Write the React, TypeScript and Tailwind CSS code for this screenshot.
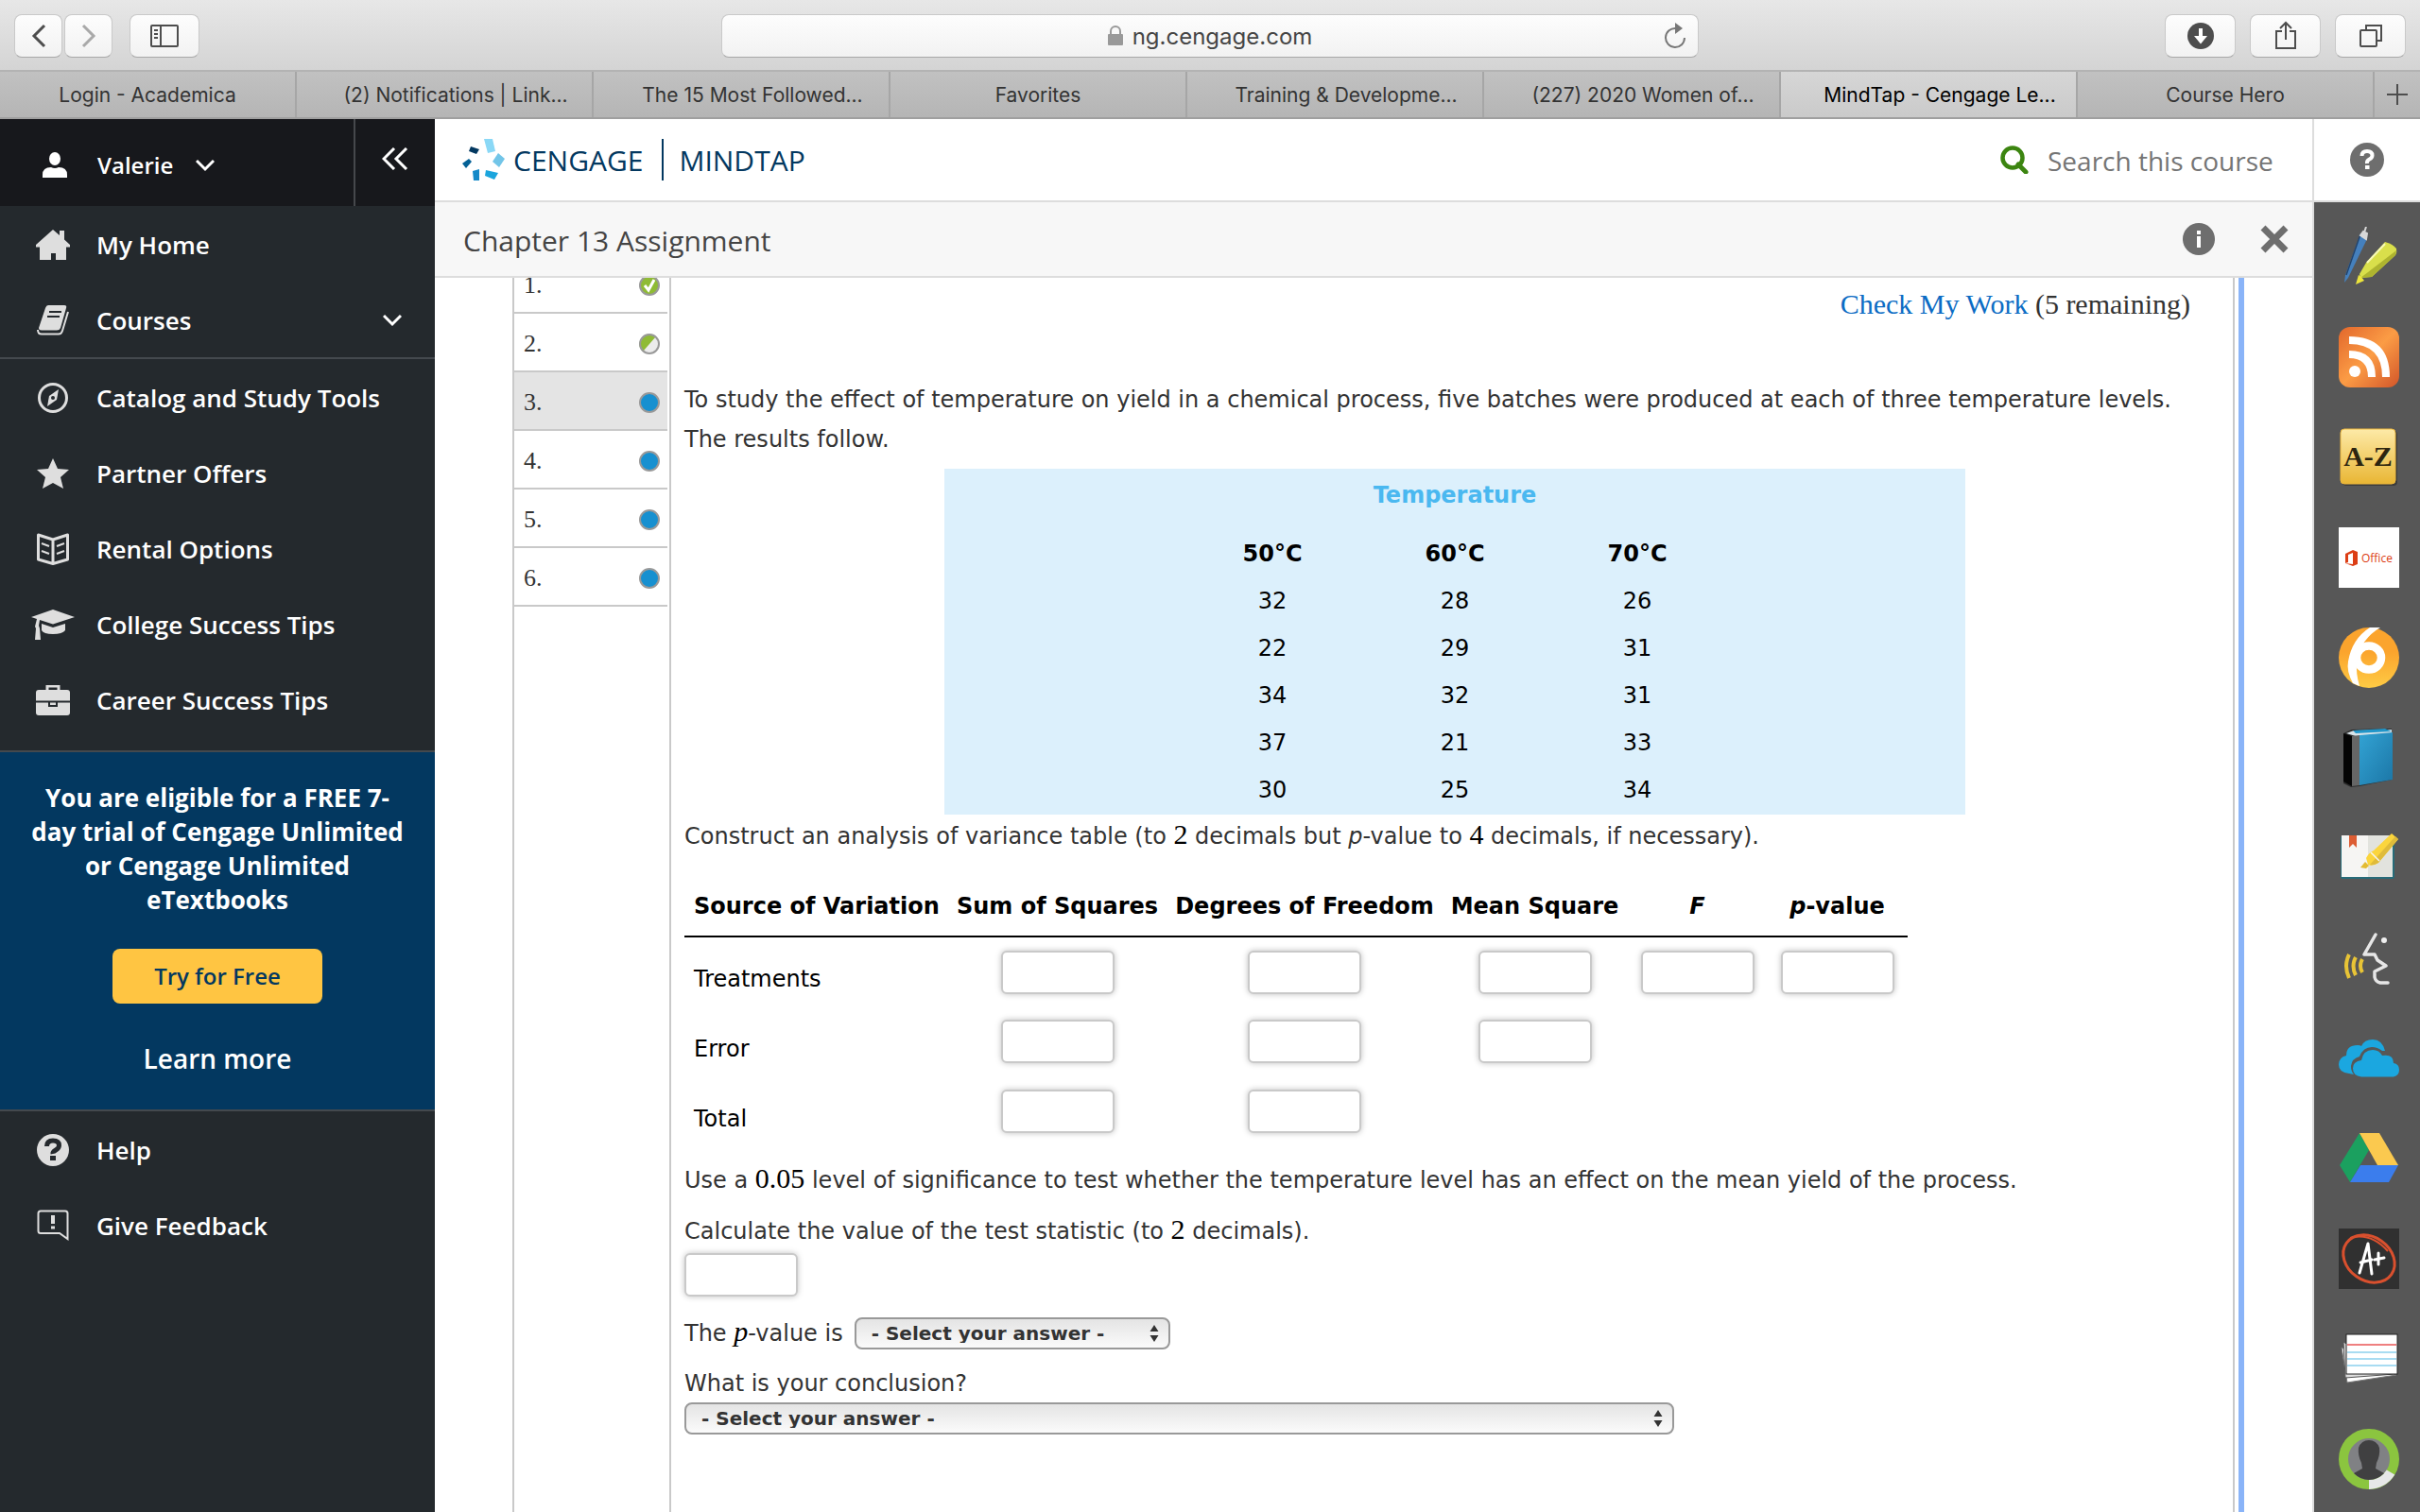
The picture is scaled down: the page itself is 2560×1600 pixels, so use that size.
import React from "react";

const TABS = [
  { label: "Login - Academica" },
  { label: "(2) Notifications | Link...", clipped: true },
  { label: "The 15 Most Followed...", clipped: true },
  { label: "Favorites" },
  { label: "Training & Developme...", clipped: true },
  { label: "(227) 2020 Women of...", clipped: true },
  { label: "MindTap - Cengage Le...", clipped: true, active: true },
  { label: "Course Hero" },
];

const toolButton =
  "flex h-[46px] items-center justify-center rounded-lg border border-[#c9c9c9] border-b-[#a8a8a8] bg-linear-to-b from-[#fdfdfd] to-[#f2f2f2] text-[#4d4d4d]";

function BrowserToolbar() {
  return (
    <div className="flex h-[76px] items-center border-b-2 border-[#b3b3b3] bg-linear-to-b from-[#e7e7e7] to-[#d4d4d4] px-[15px] pt-0.5">
      <div className="flex flex-1 items-center">
        <button aria-label="Back" className={`${toolButton} w-[51px]`}>
          <svg width="18" height="26" viewBox="0 0 18 26" fill="none" stroke="currentColor" strokeWidth="3">
            <path d="M15 2 4 13l11 11" />
          </svg>
        </button>
        <button aria-label="Forward" className={`${toolButton} ml-0.5 w-[51px]`}>
          <svg width="18" height="26" viewBox="0 0 18 26" fill="none" stroke="#a9a9a9" strokeWidth="3">
            <path d="M3 2l11 11L3 24" />
          </svg>
        </button>
        <button aria-label="Show sidebar" className={`${toolButton} ml-[18px] w-[74px]`}>
          <svg width="30" height="26" viewBox="0 0 30 26" fill="none" stroke="currentColor" strokeWidth="2">
            <rect x="1" y="2" width="28" height="22" rx="1" />
            <path d="M11 2v22M4 7h4M4 11h4M4 15h4" />
          </svg>
        </button>
      </div>
      <div className="relative flex h-[46px] w-[1034px] items-center justify-center gap-2.5 rounded-lg border border-[#c9c9c9] border-b-[#a8a8a8] bg-linear-to-b from-[#fdfdfd] to-[#f2f2f2] font-[Inter,sans-serif] text-2xl text-[#454545]">
        <svg width="16" height="22" viewBox="0 0 16 22">
          <path d="M3 9V6a5 5 0 0 1 10 0v3" fill="none" stroke="#999" strokeWidth="2" />
          <rect x="0" y="9" width="16" height="12" rx="1" fill="#999" />
        </svg>
        <span className="pt-0.5">ng.cengage.com</span>
        <button aria-label="Reload" className="absolute right-3 text-[#777]">
          <svg width="24" height="28" viewBox="0 0 24 28" fill="none" stroke="currentColor" strokeWidth="2">
            <path d="M13 6A10 10 0 1 0 22 16" />
            <path d="M12 0l8 6-8 6z" fill="currentColor" stroke="none" />
          </svg>
        </button>
      </div>
      <div className="flex flex-1 justify-end gap-[15px]">
        <button aria-label="Downloads" className={`${toolButton} w-[75px]`}>
          <svg width="28" height="28" viewBox="0 0 28 28">
            <circle cx="14" cy="14" r="14" fill="currentColor" />
            <path d="M12 6h4v8h5l-7 8.500-7-8.500h5z" fill="#fff" />
          </svg>
        </button>
        <button aria-label="Share" className={`${toolButton} w-[75px]`}>
          <svg width="24" height="32" viewBox="0 0 24 32" fill="none" stroke="currentColor" strokeWidth="2">
            <path d="M8 11H2v18h20V11h-6M12 20V2M6 8l6-6 6 6" />
          </svg>
        </button>
        <button aria-label="Show tabs" className={`${toolButton} w-[75px]`}>
          <svg width="26" height="26" viewBox="0 0 26 26" fill="none" stroke="currentColor" strokeWidth="2">
            <rect x="2" y="7" width="17" height="17" rx="1" />
            <path d="M8 7V2h16v16h-5" />
          </svg>
        </button>
      </div>
    </div>
  );
}

function TabStrip() {
  return (
    <div className="flex h-[50px] border-b-2 border-[#9f9f9f] bg-linear-to-b from-[#c1c1c1] to-[#b5b5b5] font-[Inter,sans-serif] text-[21px] text-[#333]">
      {TABS.map((t) => (
        <button
          key={t.label}
          className={`flex min-w-0 flex-1 items-center justify-center border-r-2 border-[#a6a6a6] pt-0.5 whitespace-nowrap ${
            t.active ? "bg-linear-to-b from-[#d6d6d6] to-[#cacaca] text-black" : ""
          }`}
        >
          <span className={t.clipped ? "pl-6" : ""}>{t.label}</span>
        </button>
      ))}
      <button aria-label="New tab" className="flex w-12 items-center justify-center">
        <svg width="22" height="22" viewBox="0 0 22 22" stroke="#4d4d4d" strokeWidth="2">
          <path d="M11 0v22M0 11h22" />
        </svg>
      </button>
    </div>
  );
}

const HomeIcon = (
  <svg width="36" height="32" viewBox="0 0 36 32" fill="#dedede">
    <path d="M18 0l7 6V1h5v9.500l6 5.500v2.500h-4V32H21v-7h-5v7H4V18.500H0V16z" />
  </svg>
);
const CoursesIcon = (
  <svg width="34" height="32" viewBox="0 0 34 32">
    <path d="M12 0h17q3 0 2 3l-6 21q-1 2.500-4 2.500H5Q2 26.500 2 24L9 3q1-3 3-3z" fill="#dedede" />
    <path d="M33 7l-6 20q-1 3.500-4 3.500H5Q1 30.500 1 26" fill="none" stroke="#dedede" strokeWidth="2" />
    <path d="M13 7h13M11 12h13" stroke="#24292d" strokeWidth="2" />
  </svg>
);
const CompassIcon = (
  <svg width="32" height="32" viewBox="0 0 32 32">
    <circle cx="16" cy="16" r="14.500" fill="none" stroke="#dedede" strokeWidth="3" />
    <path d="M22 7l-2 11-10 7 2-11z" fill="#dedede" />
    <circle cx="16" cy="16" r="2" fill="#24292d" />
  </svg>
);
const StarIcon = (
  <svg width="34" height="32" viewBox="0 0 34 32" fill="#dedede">
    <path d="M17 0l5 11 12 1-9 8 3 12-11-6-11 6 3-12-9-8 12-1z" />
  </svg>
);
const RentalIcon = (
  <svg width="34" height="34" viewBox="0 0 34 34" fill="none" stroke="#dedede" strokeWidth="3">
    <path d="M1.500 2L17 7l15.500-5v26L17 32.500 1.500 28zM17 7v25" strokeLinejoin="round" />
    <path d="M5 11l8 3M5 19l8 3M29 11l-8 3M29 19l-8 3" strokeWidth="2" />
  </svg>
);
const CapIcon = (
  <svg width="46" height="32" viewBox="0 0 46 32" fill="#dedede">
    <path d="M23 0l23 8-23 7.500L9 11l-1 6 1 3 1 12H4l1-12-1-2 2-8-6-2z" />
    <path d="M11 15l12 4 13-4v7q-3 4-13 4t-12-4z" />
  </svg>
);
const CaseIcon = (
  <svg width="36" height="32" viewBox="0 0 36 32">
    <path d="M12 6V1h12v5" fill="none" stroke="#dedede" strokeWidth="3" />
    <rect y="5" width="36" height="27" rx="3" fill="#dedede" />
    <path d="M0 17.500h36M14 18v4h8v-4" fill="none" stroke="#24292d" strokeWidth="2" />
  </svg>
);
const HelpIcon = (
  <svg width="34" height="34" viewBox="0 0 34 34">
    <circle cx="17" cy="17" r="17" fill="#dedede" />
    <path d="M10.500 13q0-6 6.500-6t6.500 5q0 3-3.500 5t-3 4" fill="none" stroke="#24292d" strokeWidth="5" />
    <rect x="14" y="23" width="6" height="5" fill="#24292d" />
  </svg>
);
const FeedbackIcon = (
  <svg width="34" height="34" viewBox="0 0 34 34" fill="none" stroke="#dedede">
    <path d="M4 1.500h26q2.500 0 2.500 2.500v27L24 25H4q-2.500 0-2.500-2.500V4q0-2.500 2.500-2.500z" strokeWidth="2" />
    <path d="M17 6v9M17 17.500v3" strokeWidth="4" />
  </svg>
);

function NavRow({ icon, label, chevron }: { icon: React.ReactNode; label: string; chevron?: boolean }) {
  return (
    <a href="#" className="flex h-20 items-center pt-0.5 pr-[35px] pl-8 text-[26px] font-semibold text-white">
      <span className="flex w-12 justify-center">{icon}</span>
      <span className="ml-[22px] flex-1">{label}</span>
      {chevron && <Chevron />}
    </a>
  );
}

function Chevron() {
  return (
    <svg width="20" height="14" viewBox="0 0 20 14" fill="none" stroke="#fff" strokeWidth="3">
      <path d="M1 2l9 9 9-9" />
    </svg>
  );
}

function Sidebar() {
  return (
    <aside className="flex w-[460px] shrink-0 flex-col bg-[#24292d]">
      <div className="flex h-[92px] shrink-0 bg-[#17181c] text-white">
        <button className="flex flex-1 items-center border-r-2 border-[#46484c] pt-1.5 pl-[45px] text-2xl font-semibold">
          <svg width="26" height="28" viewBox="0 0 26 28" fill="#fff">
            <ellipse cx="13" cy="7" rx="6" ry="7" />
            <path d="M0 27v-3q0-8 9-8 4 2 8 0 9 0 9 8v3z" />
          </svg>
          <span className="mr-6 ml-8">Valerie</span>
          <Chevron />
        </button>
        <button aria-label="Collapse menu" className="flex w-[84px] items-center justify-center pb-2">
          <svg width="28" height="24" viewBox="0 0 28 24" fill="none" stroke="#fff" strokeWidth="3">
            <path d="M13 1L2 12l11 11M26 1L15 12l11 11" />
          </svg>
        </button>
      </div>
      <nav className="border-b-2 border-[#44494e]">
        <NavRow icon={HomeIcon} label="My Home" />
        <NavRow icon={CoursesIcon} label="Courses" chevron />
      </nav>
      <nav className="border-b-2 border-[#44494e] pb-[14px]">
        <NavRow icon={CompassIcon} label="Catalog and Study Tools" />
        <NavRow icon={StarIcon} label="Partner Offers" />
        <NavRow icon={RentalIcon} label="Rental Options" />
        <NavRow icon={CapIcon} label="College Success Tips" />
        <NavRow icon={CaseIcon} label="Career Success Tips" />
      </nav>
      <section className="flex flex-col items-center border-b-2 border-[#44494e] bg-[#033860] px-7 pt-[30px] pb-9 text-center text-white">
        <p className="text-[26px] leading-9 font-bold">
          You are eligible for a FREE 7-
          <br />
          day trial of Cengage Unlimited
          <br />
          or Cengage Unlimited
          <br />
          eTextbooks
        </p>
        <button className="mt-[34px] h-[58px] w-[222px] rounded-lg bg-[#ffc542] text-2xl font-semibold text-[#033860]">
          Try for Free
        </button>
        <a href="#" className="mt-10 text-[28px] leading-9 font-semibold">
          Learn more
        </a>
      </section>
      <nav>
        <NavRow icon={HelpIcon} label="Help" />
        <NavRow icon={FeedbackIcon} label="Give Feedback" />
      </nav>
    </aside>
  );
}

function CourseHeader() {
  return (
    <header className="flex h-[88px] shrink-0 border-b-2 border-[#ddd] bg-white">
      <div className="flex flex-1 items-center justify-between border-r-2 border-[#ddd] pr-9 pl-[29px]">
        <div className="flex items-center text-[30px] text-[#033860]">
          <svg width="46" height="44" viewBox="0 0 46 44">
            <path d="M23 0h9l3 13-8 2z" fill="#8ad8f6" />
            <path d="M38 15l7 6-6 9-7-6z" fill="#72c5e8" />
            <path d="M25 33l13 3-4 7-10-4z" fill="#1ba5dd" />
            <path d="M11 34l7-2v12h-6z" fill="#1489c8" />
            <path d="M7 21l3 3-6 7-4-5z" fill="#046196" />
            <path d="M9 8l9 3-3 5-8-3z" fill="#033860" />
          </svg>
          <span className="ml-2">CENGAGE</span>
          <span className="mr-4 ml-5 h-11 w-0.5 bg-[#033860]" />
          <span>MINDTAP</span>
        </div>
        <label className="flex items-center gap-5">
          <svg width="30" height="30" viewBox="0 0 30 30" fill="none" stroke="#3c8510" strokeWidth="4.500">
            <circle cx="13" cy="13" r="10.500" />
            <path d="M19 20l8 8" strokeWidth="5" strokeLinecap="round" />
          </svg>
          <span className="sr-only">Search this course</span>
          <input
            type="text"
            placeholder="Search this course"
            className="w-[244px] bg-transparent pt-0.5 text-[28px] outline-none placeholder:text-[#757575]"
          />
        </label>
      </div>
      <button aria-label="Help" className="flex w-28 items-center justify-center">
        <svg width="36" height="36" viewBox="0 0 36 36">
          <circle cx="18" cy="18" r="18" fill="#6e6e6e" />
          <path d="M12.500 14q0-5 5.500-5t5.500 4.500q0 2.500-3 4T18 22" fill="none" stroke="#fff" strokeWidth="4" />
          <rect x="16" y="24" width="4.500" height="4" fill="#fff" />
        </svg>
      </button>
    </header>
  );
}

const STATUS = ["done", "half", "todo", "todo", "todo", "todo"];

function StatusDot({ kind }: { kind: string }) {
  return (
    <svg width="22" height="22" viewBox="0 0 22 22">
      <circle cx="11" cy="11" r="10" fill={kind === "done" ? "#8fbb35" : kind === "half" ? "#ececec" : "#1790d0"} />
      {kind === "half" && <path d="M4 19A10 10 0 0 1 18 3z" fill="#8fbb35" />}
      {kind === "done" && <path d="M6 11l4 5 6-11" fill="none" stroke="#fff" strokeWidth="3" />}
      <circle cx="11" cy="11" r="10" fill="none" stroke="#999" strokeWidth="2" />
    </svg>
  );
}

function QuestionList() {
  return (
    <ol className="w-[168px] shrink-0 border-x-2 border-[#c9c9c9]">
      {STATUS.map((s, i) => (
        <li
          key={i}
          className={`mr-0.5 h-[62px] border-b-2 border-[#c9c9c9] first:-mt-6 ${i === 2 ? "bg-[#e4e4e4]" : ""}`}
        >
          <a href="#" className="flex h-full items-center justify-between pt-[3px] pr-2 pl-2.5 font-['Liberation_Serif',serif] text-[26px] text-[#333]">
            <span>{i + 1}.</span>
            <StatusDot kind={s} />
          </a>
        </li>
      ))}
    </ol>
  );
}

function Num({ children }: { children: React.ReactNode }) {
  return <span className="font-['Liberation_Serif',serif] text-[30px] leading-none text-black">{children}</span>;
}

function AnswerBox({ label }: { label: string }) {
  return (
    <input
      type="text"
      aria-label={label}
      className="block h-[46px] w-[120px] rounded-md border-2 border-[#c9c9c9] bg-white px-2 shadow-[0_0_6px_rgba(0,0,0,0.25)] outline-none"
    />
  );
}

function AnswerSelect({ id, wide }: { id: string; wide?: boolean }) {
  return (
    <span className={`relative ${wide ? "block w-[1047px]" : "inline-block w-[334px]"}`}>
      <select
        id={id}
        className="block h-[34px] w-full appearance-none rounded-lg border-2 border-[#999] bg-linear-to-b from-[#e4e4e4] to-[#fbfbfb] pl-4 text-[20px] leading-none font-bold text-[#333]"
      >
        <option>- Select your answer -</option>
      </select>
      <svg className="pointer-events-none absolute top-2 right-3" width="10" height="18" viewBox="0 0 10 18" fill="#333">
        <path d="M5 0l4.500 7h-9zM5 18l4.500-7h-9z" />
      </svg>
    </span>
  );
}

const DATA = [
  [32, 28, 26],
  [22, 29, 31],
  [34, 32, 31],
  [37, 21, 33],
  [30, 25, 34],
];

function TemperatureTable() {
  return (
    <div className="mx-auto mt-2.5 flex w-[1080px] justify-center bg-[#dcf0fc] pb-0.5">
      <table className="table-fixed text-center text-black">
        <colgroup>
          <col className="w-[193px]" />
          <col className="w-[193px]" />
          <col className="w-[193px]" />
        </colgroup>
        <thead>
          <tr className="h-[54px] text-[#4ab8f0]">
            <th colSpan={3} className="pt-0.5">
              Temperature
            </th>
          </tr>
          <tr className="h-[60px]">
            <th className="pt-3">50°C</th>
            <th className="pt-3">60°C</th>
            <th className="pt-3">70°C</th>
          </tr>
        </thead>
        <tbody>
          {DATA.map((r, i) => (
            <tr key={i} className="h-[50px]">
              {r.map((v, j) => (
                <td key={j} className="pt-0.5">
                  {v}
                </td>
              ))}
            </tr>
          ))}
        </tbody>
      </table>
    </div>
  );
}

const COLUMNS = ["Sum of Squares", "Degrees of Freedom", "Mean Square", "F", "p-value"];
const SOURCES = [
  { name: "Treatments", boxes: 5 },
  { name: "Error", boxes: 3 },
  { name: "Total", boxes: 2 },
];

function AnovaTable() {
  return (
    <table className="mt-[22px] w-[1294px] table-fixed text-black">
      <colgroup>
        <col className="w-[278px]" />
        <col className="w-[233px]" />
        <col className="w-[290px]" />
        <col className="w-[197px]" />
        <col className="w-[147px]" />
        <col className="w-[149px]" />
      </colgroup>
      <thead>
        <tr className="h-[63px] border-b-2 border-black whitespace-nowrap">
          <th className="pl-2.5 text-left">Source of Variation</th>
          <th>Sum of Squares</th>
          <th>Degrees of Freedom</th>
          <th>Mean Square</th>
          <th>
            <i>F</i>
          </th>
          <th>
            <i>p</i>-value
          </th>
        </tr>
      </thead>
      <tbody>
        {SOURCES.map((s) => (
          <tr key={s.name} className="h-[74px]">
            <th scope="row" className="pt-[15px] pl-2.5 text-left font-normal">
              {s.name}
            </th>
            {COLUMNS.map((c, i) => (
              <td key={c}>
                {i < s.boxes && (
                  <div className="flex justify-center">
                    <AnswerBox label={`${s.name}, ${c}`} />
                  </div>
                )}
              </td>
            ))}
          </tr>
        ))}
      </tbody>
    </table>
  );
}

function Question() {
  return (
    <article className="flex-1 pr-2 pl-[14px] font-['DejaVu_Sans',sans-serif] text-[24px] leading-[42px] text-[#333]">
      <p className="mr-[37px] pt-2 text-right font-['Liberation_Serif',serif] text-[30px] leading-10">
        <a href="#" className="text-[#0b6cc4]">
          Check My Work
        </a>{" "}
        (5 remaining)
      </p>
      <p className="mt-[60px] mr-12">
        To study the effect of temperature on yield in a chemical process, five batches were produced at each of three
        temperature levels. The results follow.
      </p>
      <TemperatureTable />
      <p className="mt-0.5">
        Construct an analysis of variance table (to <Num>2</Num> decimals but <i>p</i>-value to <Num>4</Num> decimals, if
        necessary).
      </p>
      <AnovaTable />
      <p className="mt-[15px]">
        Use a <Num>0.05</Num> level of significance to test whether the temperature level has an effect on the mean yield
        of the process.
      </p>
      <p className="mt-3 mb-0.5">
        Calculate the value of the test statistic (to <Num>2</Num> decimals).
      </p>
      <AnswerBox label="Value of the test statistic" />
      <div className="mt-[18px] flex items-center gap-3">
        <label htmlFor="p-value">
          The{" "}
          <Num>
            <i>p</i>
          </Num>
          -value is
        </label>
        <AnswerSelect id="p-value" />
      </div>
      <label htmlFor="conclusion" className="mt-3 block leading-10">
        What is your conclusion?
      </label>
      <AnswerSelect id="conclusion" wide />
    </article>
  );
}

const TOOLS: { name: string; art: React.ReactNode }[] = [
  {
    name: "Highlighter",
    art: (
      <>
        <path d="M23 7l7 3-1 5L10 54l-4 5 1-8z" fill="#4580bd" />
        <path d="M23 8L8 51" stroke="#23446d" strokeWidth="1.500" />
        <path d="M29 0l-2 6M23 9l3-4 4 2-1 6z" stroke="#d8d8d8" strokeWidth="2" fill="#d8d8d8" />
        <path d="M49 16q8 2 12 7 1 4-1 7L35 53l-12 1-1-4 7-12z" fill="#d9df4b" />
        <path d="M61 25q0 4-2 6L35 53l-12 1 8-6z" fill="#aeb42f" />
        <path d="M49 18L30 38" stroke="#f7f9b8" strokeWidth="2" />
        <path d="M21 51l-3 10 9-4-3-4z" fill="#ece43c" />
      </>
    ),
  },
  {
    name: "RSS feed",
    art: (
      <>
        <rect width="64" height="64" rx="12" fill="url(#rss)" />
        <circle cx="17" cy="47" r="6" fill="#fff" />
        <path d="M11 29q24 0 24 24M11 14q39 0 39 39" fill="none" stroke="#fff" strokeWidth="8" />
      </>
    ),
  },
  {
    name: "Glossary",
    art: (
      <>
        <rect x="4" y="4" width="58" height="58" rx="4" fill="#3c3c3c" />
        <rect x="2" y="2" width="58" height="58" rx="4" fill="url(#gold)" stroke="#edb73c" strokeWidth="1" />
        <text x="31" y="41" textAnchor="middle" fontSize="30" fontWeight="700" fill="#2c2510" className="font-['Liberation_Serif',serif]">
          A-Z
        </text>
      </>
    ),
  },
  {
    name: "Office",
    art: (
      <>
        <rect width="64" height="64" fill="#fff" />
        <path d="M7 28l8-4 5 2v13l-5 2-8-3 8 1V27l-5 2v8l-3 1z" fill="#dc3e15" />
        <text x="24" y="37" fontSize="12" fill="#dc3e15" className="font-['Open_Sans',sans-serif]">
          Office
        </text>
      </>
    ),
  },
  {
    name: "Student success",
    art: (
      <>
        <circle cx="32" cy="32" r="32" fill="url(#amber)" />
        <path d="M33 0h11Q24 12 19 34q-1 15 3 28l-7-3Q8 46 10 36 14 12 33 0z" fill="#fff" />
        <ellipse cx="32" cy="32" rx="13" ry="12.500" fill="none" stroke="#fff" strokeWidth="8.500" />
      </>
    ),
  },
  {
    name: "Dictionary",
    art: (
      <>
        <path d="M5 6l9-4 42-1v54l-34 7-9 1-8-4z" fill="#2b2b2b" />
        <path d="M8 6l8-3 40-1v4l-38 3z" fill="#d9e4ea" />
        <path d="M15 3l34-2 7 3-38 2z" fill="#2196c9" />
        <path d="M5 6l9 3v53l-9-5z" fill="#050505" />
        <path d="M14 9l8-1v53l-8 1z" fill="#666" />
        <path d="M22 8l35-3v50l-35 6z" fill="url(#blue)" />
      </>
    ),
  },
  {
    name: "Notes",
    art: (
      <>
        <rect x="2" y="9" width="57" height="45" rx="2" fill="#276b78" />
        <path d="M3 8h28v44H3z" fill="#f6f5f3" />
        <path d="M31 8h26v44H31z" fill="#e2e3de" />
        <path d="M11 8h8v13l-4-4-4 4z" fill="#dd5d33" />
        <path d="M23 42l5-6 4 4-3 3z" fill="#e3bb32" />
        <path d="M29 32q3-6 8-8L56 6l7 6-21 25q-6 4-11 2z" fill="#fbd53d" />
        <path d="M63 12L42 37q-5 3-9 2L60 9z" fill="#dfbb3a" />
        <path d="M34 26l9 9" stroke="#f6f5f3" strokeWidth="1.500" />
      </>
    ),
  },
  {
    name: "Read aloud",
    art: (
      <>
        <path d="M39 7L27 28h11l3 6 9 6-12 6v6q1 5 6 6h8" fill="none" stroke="#e6e6e6" strokeWidth="3.500" strokeLinecap="round" strokeLinejoin="round" />
        <circle cx="48" cy="13" r="3" fill="#f0f0f0" />
        <path d="M11 28q-6 12 0 25M18 31q-5 9 0 19M25 33q-4 7 0 14" fill="none" stroke="#e8c436" strokeWidth="4" />
      </>
    ),
  },
  {
    name: "OneDrive",
    art: (
      <>
        <path d="M11 48Q0 47 0 38.500 0 31 8 29q0-11 12-11 3 0 4 1 3-7 12-7 10 0 13 12H46Q41 20 35 20 26 20 22 30q-8 2-9 10 0 6 3 9z" fill="#1ba7e0" />
        <path d="M24 51.500q-9-1-9-9Q15 35 24 34q2-11 12-11 7 0 10 6 12-2 12 8 6 1 6 7t-6 7.500z" fill="#1ba7e0" />
      </>
    ),
  },
  {
    name: "Google Drive",
    art: (
      <>
        <path d="M22 5l10 18L12 57 1 39z" fill="#1ba05f" />
        <path d="M22 5h21l20 34H41z" fill="#fbc94f" />
        <path d="M23 39h40L53 57H12z" fill="#3b7ded" />
      </>
    ),
  },
  {
    name: "Grades",
    art: (
      <>
        <rect width="64" height="64" fill="#303030" />
        <ellipse cx="32" cy="32" rx="29" ry="23" transform="rotate(35 32 32)" fill="none" stroke="#d9502e" strokeWidth="3" />
        <path d="M12 10Q34 4 52 24" fill="none" stroke="#d9502e" strokeWidth="2" />
        <g fill="none" stroke="#fff" strokeWidth="3" strokeLinecap="round" strokeLinejoin="round">
          <path d="M22 47l9-31 4 32M23 36l12-3M42 26v12M38 33l10-2" />
        </g>
      </>
    ),
  },
  {
    name: "Flashcards",
    art: (
      <>
        <path d="M3 20l6 37 52-8z" fill="#fff" stroke="#777" />
        <path d="M5 14l2 38 53-4z" fill="#ddd" stroke="#555" />
        <rect x="8" y="6" width="54" height="42" fill="#fff" stroke="#222" />
        <path d="M9 17h52" stroke="#ef8080" strokeWidth="2" />
        <path d="M9 25h52M9 32h52M9 39h52" stroke="#a8dcf2" strokeWidth="2" />
      </>
    ),
  },
  {
    name: "Profile",
    art: (
      <>
        <circle cx="32" cy="32" r="27" fill="#808184" stroke="#8bc53f" strokeWidth="10" />
        <path d="M32 59a27 27 0 0 0 23-13" fill="none" stroke="#e6e7e8" strokeWidth="10" />
        <path d="M16 47l9-5-1-6q-4-8-3-16 3-8 11-8t11 8q1 8-3 16l-1 6 9 5q-7 7-16 7t-16-7z" fill="#404041" />
      </>
    ),
  },
];

function ToolRail() {
  return (
    <aside className="w-[114px] shrink-0 overflow-hidden border-l-2 border-[#ddd] bg-[#575757]">
      <svg width="0" height="0" className="absolute">
        <linearGradient id="rss" x1="0" y1="0" x2="1" y2="1">
          <stop offset="0" stopColor="#e2672c" />
          <stop offset="0.500" stopColor="#fb9c45" />
          <stop offset="1" stopColor="#d35529" />
        </linearGradient>
        <linearGradient id="gold" x1="0" y1="0" x2="0" y2="1">
          <stop offset="0" stopColor="#fdeaa8" />
          <stop offset="1" stopColor="#e9b634" />
        </linearGradient>
        <linearGradient id="amber" x1="0" y1="0" x2="0" y2="1">
          <stop offset="0.400" stopColor="#fba42d" />
          <stop offset="1" stopColor="#fecb45" />
        </linearGradient>
        <linearGradient id="blue" x1="0" y1="0" x2="1" y2="1">
          <stop offset="0" stopColor="#32a3d4" />
          <stop offset="1" stopColor="#1c76a6" />
        </linearGradient>
      </svg>
      <div className="flex flex-col items-start gap-[42px] py-[26px] pl-[26px]">
        {TOOLS.map((t) => (
          <button key={t.name} aria-label={t.name} className="size-16">
            <svg width="64" height="64" viewBox="0 0 64 64">
              {t.art}
            </svg>
          </button>
        ))}
      </div>
    </aside>
  );
}

export default function App() {
  return (
    <div className="flex h-screen flex-col overflow-hidden bg-white font-['Open_Sans',sans-serif]">
      <BrowserToolbar />
      <TabStrip />
      <div className="flex min-h-0 flex-1">
        <Sidebar />
        <div className="flex min-w-0 flex-1 flex-col">
          <CourseHeader />
          <div className="flex min-h-0 flex-1">
            <div className="flex min-w-0 flex-1 flex-col">
              <div className="flex h-20 shrink-0 items-center border-b-2 border-[#ddd] bg-[#f7f7f7] pr-[25px] pl-[30px]">
                <h1 className="flex-1 pt-0.5 text-[30px] text-[#444]">Chapter 13 Assignment</h1>
                <button aria-label="Information" className="mr-12">
                  <svg width="34" height="34" viewBox="0 0 34 34">
                    <circle cx="17" cy="17" r="17" fill="#6e6e6e" />
                    <path d="M17 8v4M17 14v12" stroke="#fff" strokeWidth="4" />
                  </svg>
                </button>
                <button aria-label="Close">
                  <svg width="30" height="30" viewBox="0 0 30 30" stroke="#6e6e6e" strokeWidth="7">
                    <path d="M3 3l24 24M27 3L3 27" />
                  </svg>
                </button>
              </div>
              <main className="flex min-h-0 flex-1 overflow-hidden pr-[72px] pl-[82px]">
                <QuestionList />
                <Question />
                <div className="w-3 shrink-0 border-r-[6px] border-l-2 border-l-[#c9c9c9] border-r-[#8ab4f8]" />
              </main>
            </div>
            <ToolRail />
          </div>
        </div>
      </div>
    </div>
  );
}
